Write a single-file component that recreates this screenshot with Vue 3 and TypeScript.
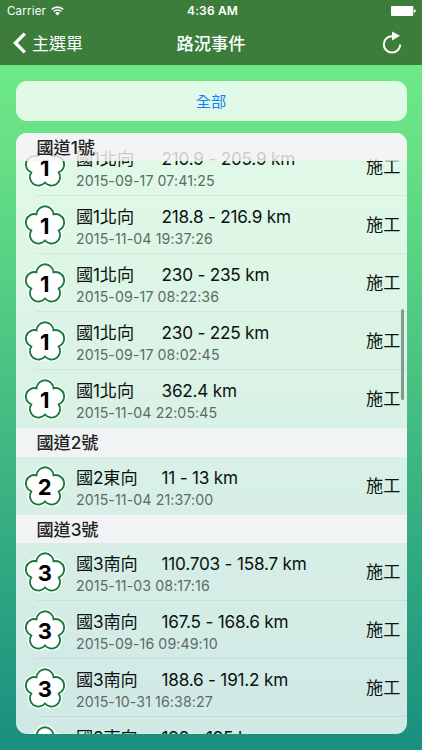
<script setup lang="ts">
interface RoadEvent {
  road: string
  range: string
  time: string
}
interface Section {
  title: string
  shield: number
  events: RoadEvent[]
}

const sections: Section[] = [
  {
    title: '國道1號',
    shield: 1,
    events: [
      { road: '國1北向', range: '210.9 - 205.9 km', time: '2015-09-17 07:41:25' },
      { road: '國1北向', range: '218.8 - 216.9 km', time: '2015-11-04 19:37:26' },
      { road: '國1北向', range: '230 - 235 km', time: '2015-09-17 08:22:36' },
      { road: '國1北向', range: '230 - 225 km', time: '2015-09-17 08:02:45' },
      { road: '國1北向', range: '362.4 km', time: '2015-11-04 22:05:45' },
    ],
  },
  {
    title: '國道2號',
    shield: 2,
    events: [{ road: '國2東向', range: '11 - 13 km', time: '2015-11-04 21:37:00' }],
  },
  {
    title: '國道3號',
    shield: 3,
    events: [
      { road: '國3南向', range: '110.703 - 158.7 km', time: '2015-11-03 08:17:16' },
      { road: '國3南向', range: '167.5 - 168.6 km', time: '2015-09-16 09:49:10' },
      { road: '國3南向', range: '188.6 - 191.2 km', time: '2015-10-31 16:38:27' },
      { road: '國3南向', range: '192 - 195 km', time: '' },
    ],
  },
]

// Plum blossom: five arcs joined at the notches between the petals
const notches = [0, 1, 2, 3, 4].map((i) => {
  const a = ((i * 72 - 54) * Math.PI) / 180
  return `${(21 + 14.5 * Math.cos(a)).toFixed(2)} ${(22 + 14.5 * Math.sin(a)).toFixed(2)}`
})
const blossom =
  `M${notches[4]} ` + notches.map((p) => `A8.54 8.54 0 0 1 ${p}`).join(' ') + ' Z'
</script>

<template>
  <div class="screen">
    <header class="top">
      <div class="status">
        <div class="carrier">
          <span>Carrier</span>
          <svg class="wifi" width="13" height="10" viewBox="0 0 13 10">
            <path d="M0.8 3.4 A8.2 8.2 0 0 1 12.2 3.4" />
            <path d="M2.7 5.5 A5.4 5.4 0 0 1 10.3 5.5" />
            <path class="dot" d="M6.5 9.6 L4.1 7.1 A3.4 3.4 0 0 1 8.9 7.1 Z" />
          </svg>
        </div>
        <span class="clock">4:36 AM</span>
        <svg class="battery" width="25" height="10" viewBox="0 0 25 10">
          <rect x="0" y="0" width="22.3" height="10" rx="1" />
          <path d="M23 3.3 Q24.8 3.6 24.8 5 Q24.8 6.4 23 6.7 Z" />
        </svg>
      </div>
      <div class="nav">
        <div class="back">
          <svg width="14" height="22" viewBox="0 0 14 22"><path d="M11.8 1.6 L2.4 11 L11.8 20.4" /></svg>
          <span>主選單</span>
        </div>
        <h1>路況事件</h1>
        <svg class="reload" width="20" height="24" viewBox="0 0 20 24">
          <path class="arc" d="M10.5 5.2 A8.2 8.2 0 1 0 18.2 13.4" />
          <path class="tip" d="M10 0.6 L18 4.8 L10 9.6 Z" />
        </svg>
      </div>
    </header>

    <main>
      <button class="filter">全部</button>

      <div class="list">
        <section v-for="s in sections" :key="s.title">
          <h2>{{ s.title }}</h2>
          <ul>
            <li v-for="e in s.events" :key="e.range">
              <svg class="shield" width="42" height="42" viewBox="0 0 42 42">
                <path class="halo" :d="blossom" />
                <path class="ring" :d="blossom" />
                <text x="20.8" y="30">{{ s.shield }}</text>
              </svg>
              <div class="body">
                <div class="info">
                  <p class="where"><span class="road">{{ e.road }}</span><span class="range">{{ e.range }}</span></p>
                  <p class="time">{{ e.time }}</p>
                </div>
                <span class="kind">施工</span>
              </div>
            </li>
          </ul>
        </section>
        <i class="scrollbar"></i>
      </div>
    </main>
  </div>
</template>

<style>
body {
  margin: 0;
  overflow: hidden;
}
</style>

<style scoped>
.screen {
  box-sizing: border-box;
  width: 422px;
  height: 750px;
  display: flex;
  flex-direction: column;
  overflow: hidden;
  font-family: Inter, 'Noto Sans CJK TC', sans-serif;
  background: linear-gradient(180deg, #6eea86 8%, #67e085 20%, #1a917f 98%);
}
h1, h2, p, ul {
  margin: 0;
  padding: 0;
  font-weight: 400;
}
.top {
  height: 65px;
  flex: none;
  background: #3c7d3c;
  color: #fff;
}
.status {
  height: 21px;
  display: grid;
  grid-template-columns: 1fr auto 1fr;
  align-items: center;
  padding: 0 6px 0 7px;
  font-size: 11.5px;
}
.carrier {
  display: flex;
  align-items: center;
  gap: 5px;
  letter-spacing: 0.2px;
}
.wifi {
  fill: none;
  stroke: #fff;
  stroke-width: 1.6;
}
.wifi .dot {
  fill: #fff;
  stroke: none;
}
.clock {
  font-size: 12px;
  font-weight: 600;
  letter-spacing: 0.15px;
  margin-left: 2px;
}
.battery {
  justify-self: end;
  fill: #fff;
}
.nav {
  height: 43px;
  display: grid;
  grid-template-columns: 1fr auto 1fr;
  align-items: center;
  padding: 0 20px 0 13px;
  font-size: 17px;
}
.back {
  display: flex;
  align-items: center;
  gap: 5px;
}
.back svg {
  fill: none;
  stroke: #fff;
  stroke-width: 3.4;
}
.nav h1 {
  font-size: 17.3px;
  font-weight: 500;
  margin-left: 7px;
}
.reload {
  justify-self: end;
}
.reload .arc {
  fill: none;
  stroke: #fff;
  stroke-width: 2;
}
.reload .tip {
  fill: #fff;
}
main {
  display: flex;
  flex-direction: column;
  gap: 12px;
  padding: 15.5px 15.5px 0;
}
.filter {
  height: 40px;
  border: 0;
  border-radius: 11px;
  background: rgba(255, 255, 255, 0.8);
  color: #157efb;
  font: inherit;
  font-size: 15.3px;
  padding: 0 0 2px;
}
.list {
  position: relative;
  height: 601px;
  margin-top: 0.5px;
  border-radius: 11px;
  overflow: hidden;
  background: rgba(255, 255, 255, 0.8);
}
h2 {
  position: relative;
  z-index: 1;
  box-sizing: border-box;
  height: 28.4px;
  line-height: 28.4px;
  padding: 1px 0 0 21px;
  font-size: 17.2px;
  font-weight: 500;
  letter-spacing: -0.1px;
  color: #222;
  background: rgba(246, 244, 246, 0.82);
}
/* The list is scrolled: the first row slides under its pinned header */
section:first-child ul {
  margin-top: -23.4px;
}
ul {
  list-style: none;
}
li {
  height: 58.05px;
  display: flex;
  align-items: center;
  padding-left: 8.5px;
}
.shield {
  flex: none;
  overflow: visible;
}
.shield .halo {
  fill: #fff;
  stroke: #fff;
  stroke-width: 4.4;
  stroke-linejoin: round;
}
.shield .ring {
  fill: #fff;
  stroke: #167b3c;
  stroke-width: 1.9;
}
.shield text {
  font-family: Inter, sans-serif;
  font-size: 22px;
  font-weight: 700;
  text-anchor: middle;
}
.body {
  flex: 1;
  align-self: stretch;
  display: flex;
  justify-content: space-between;
  align-items: center;
  margin-left: -30px;
  padding: 0 6px 0 40px;
  border-bottom: 1px solid rgba(0, 40, 60, 0.06);
}
li:last-child .body {
  border-bottom-color: transparent;
}
.info {
  padding-top: 4px;
}
.where {
  display: flex;
  height: 24px;
  line-height: 24px;
  font-size: 17.2px;
  letter-spacing: -0.16px;
  color: #0c120f;
}
.road {
  width: 85.5px;
}
.range {
  letter-spacing: -0.22px;
}
.time {
  height: 19px;
  line-height: 20px;
  font-size: 14.2px;
  letter-spacing: 0.09px;
  color: #5f6a65;
}
.kind {
  font-size: 17.2px;
  padding-bottom: 2px;
  color: #0c120f;
}
.scrollbar {
  position: absolute;
  right: 3px;
  top: 175.5px;
  width: 2.5px;
  height: 91px;
  border-radius: 2px;
  background: rgba(60, 80, 70, 0.55);
}
</style>
